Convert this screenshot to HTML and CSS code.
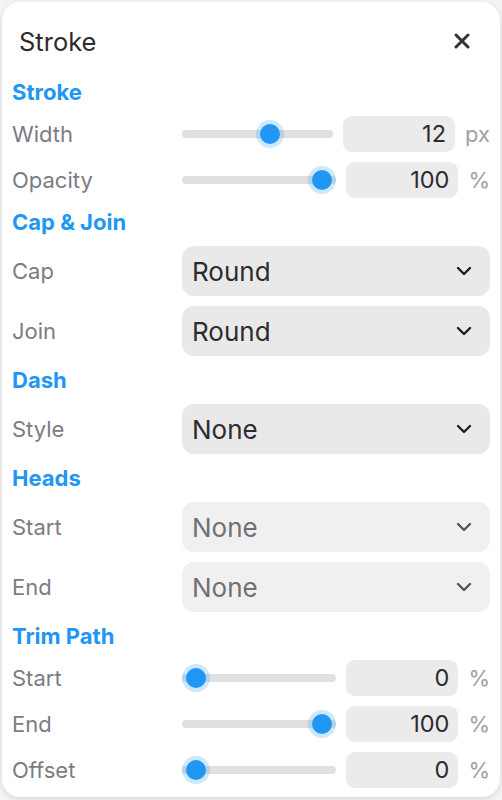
FILE: index.html
```html
<!DOCTYPE html>
<html>
<head>
<meta charset="utf-8">
<link rel="stylesheet" href="styles.css">
</head>
<body>
<div class="panel">
  <div class="titlebar">
    <span class="title">Stroke</span>
    <button class="close" aria-label="Close">
      <svg width="16" height="16" viewBox="0 0 16 16"><path d="M2 2 L14 14 M14 2 L2 14" stroke="#333" stroke-width="3" stroke-linecap="round" fill="none"/></svg>
    </button>
  </div>

  <div class="section">Stroke</div>
  <div class="row">
    <span class="label">Width</span>
    <div class="ctrl">
      <div class="slider"><div class="track"></div><div class="thumb" style="--v:0.6"></div></div>
      <div class="num">12</div>
      <span class="unit">px</span>
    </div>
  </div>
  <div class="row">
    <span class="label">Opacity</span>
    <div class="ctrl">
      <div class="slider"><div class="track"></div><div class="thumb" style="--v:1"></div></div>
      <div class="num">100</div>
      <span class="unit">%</span>
    </div>
  </div>

  <div class="section">Cap &amp; Join</div>
  <div class="row">
    <span class="label">Cap</span>
    <div class="select"><span>Round</span><svg class="chev" width="16" height="10" viewBox="0 0 16 10"><path d="M2 2 L8 8 L14 2" stroke="currentColor" stroke-width="2.4" fill="none" stroke-linecap="round" stroke-linejoin="round"/></svg></div>
  </div>
  <div class="row">
    <span class="label">Join</span>
    <div class="select"><span>Round</span><svg class="chev" width="16" height="10" viewBox="0 0 16 10"><path d="M2 2 L8 8 L14 2" stroke="currentColor" stroke-width="2.4" fill="none" stroke-linecap="round" stroke-linejoin="round"/></svg></div>
  </div>

  <div class="section">Dash</div>
  <div class="row">
    <span class="label">Style</span>
    <div class="select"><span>None</span><svg class="chev" width="16" height="10" viewBox="0 0 16 10"><path d="M2 2 L8 8 L14 2" stroke="currentColor" stroke-width="2.4" fill="none" stroke-linecap="round" stroke-linejoin="round"/></svg></div>
  </div>

  <div class="section">Heads</div>
  <div class="row">
    <span class="label">Start</span>
    <div class="select disabled"><span>None</span><svg class="chev" width="16" height="10" viewBox="0 0 16 10"><path d="M2 2 L8 8 L14 2" stroke="currentColor" stroke-width="2.4" fill="none" stroke-linecap="round" stroke-linejoin="round"/></svg></div>
  </div>
  <div class="row">
    <span class="label">End</span>
    <div class="select disabled"><span>None</span><svg class="chev" width="16" height="10" viewBox="0 0 16 10"><path d="M2 2 L8 8 L14 2" stroke="currentColor" stroke-width="2.4" fill="none" stroke-linecap="round" stroke-linejoin="round"/></svg></div>
  </div>

  <div class="section">Trim Path</div>
  <div class="row">
    <span class="label">Start</span>
    <div class="ctrl">
      <div class="slider"><div class="track"></div><div class="thumb" style="--v:0"></div></div>
      <div class="num">0</div>
      <span class="unit">%</span>
    </div>
  </div>
  <div class="row">
    <span class="label">End</span>
    <div class="ctrl">
      <div class="slider"><div class="track"></div><div class="thumb" style="--v:1"></div></div>
      <div class="num">100</div>
      <span class="unit">%</span>
    </div>
  </div>
  <div class="row">
    <span class="label">Offset</span>
    <div class="ctrl">
      <div class="slider"><div class="track"></div><div class="thumb" style="--v:0"></div></div>
      <div class="num">0</div>
      <span class="unit">%</span>
    </div>
  </div>
</div>
</body>
</html>
```

FILE: styles.css
```css
* { box-sizing: border-box; }
html, body { margin: 0; padding: 0; }
body {
  background: #f4f4f4;
  font-family: Inter, "Noto Sans", sans-serif;
  width: 502px;
  height: 800px;
  overflow: hidden;
}
.panel {
  margin: 2px 2px 0 2px;
  width: 498px;
  background: #fff;
  border-radius: 18px;
  box-shadow: 0 2px 6px rgba(0,0,0,0.12);
  padding: 12px 10px 9px 10px;
  display: flex;
  flex-direction: column;
  gap: 10px;
}
.titlebar {
  height: 54px;
  display: flex;
  align-items: center;
  justify-content: space-between;
  padding-left: 7px;
}
.title {
  font-size: 25.5px;
  color: #2c2c30;
  font-weight: 400;
}
.close {
  width: 28px;
  height: 28px;
  border: 0;
  background: transparent;
  padding: 0;
  margin-right: 14px;
  display: flex;
  align-items: center;
  justify-content: center;
}
.section {
  height: 28px;
  line-height: 28px;
  font-size: 22px;
  font-weight: 700;
  color: #2196f3;
}
.row {
  display: grid;
  grid-template-columns: 170px 1fr;
  align-items: center;
}
.label {
  font-size: 22px;
  color: #7c7c82;
}
.ctrl {
  display: flex;
  align-items: center;
  gap: 10px;
  height: 36px;
}
.slider {
  flex: 1;
  position: relative;
  height: 36px;
}
.track {
  position: absolute;
  left: 0;
  right: 0;
  top: 14px;
  height: 8px;
  border-radius: 4px;
  background: #e0e0e2;
}
.thumb {
  position: absolute;
  top: 8px;
  left: calc(14px + (100% - 28px) * var(--v));
  width: 20px;
  height: 20px;
  margin-left: -10px;
  border-radius: 50%;
  background: #2196f3;
  box-shadow: 0 0 0 4px rgba(33,150,243,0.22);
}
.num {
  width: 112px;
  height: 36px;
  border-radius: 9px;
  background: #ebebeb;
  font-size: 23.5px;
  color: #2c2c30;
  text-align: right;
  padding-right: 9px;
  line-height: 36px;
}
.unit {
  font-size: 22px;
  color: #a0a0a4;
  min-width: 18px;
}
.select {
  height: 50px;
  border-radius: 12px;
  background: #e9e9e9;
  display: flex;
  align-items: center;
  justify-content: space-between;
  padding: 0 18px 0 10px;
  font-size: 26px;
  color: #2c2c30;
}
.select .chev { color: #1e1e22; }
.select.disabled {
  background: #f0f0f0;
  color: #707074;
}
.select.disabled .chev { color: #555; }
```
